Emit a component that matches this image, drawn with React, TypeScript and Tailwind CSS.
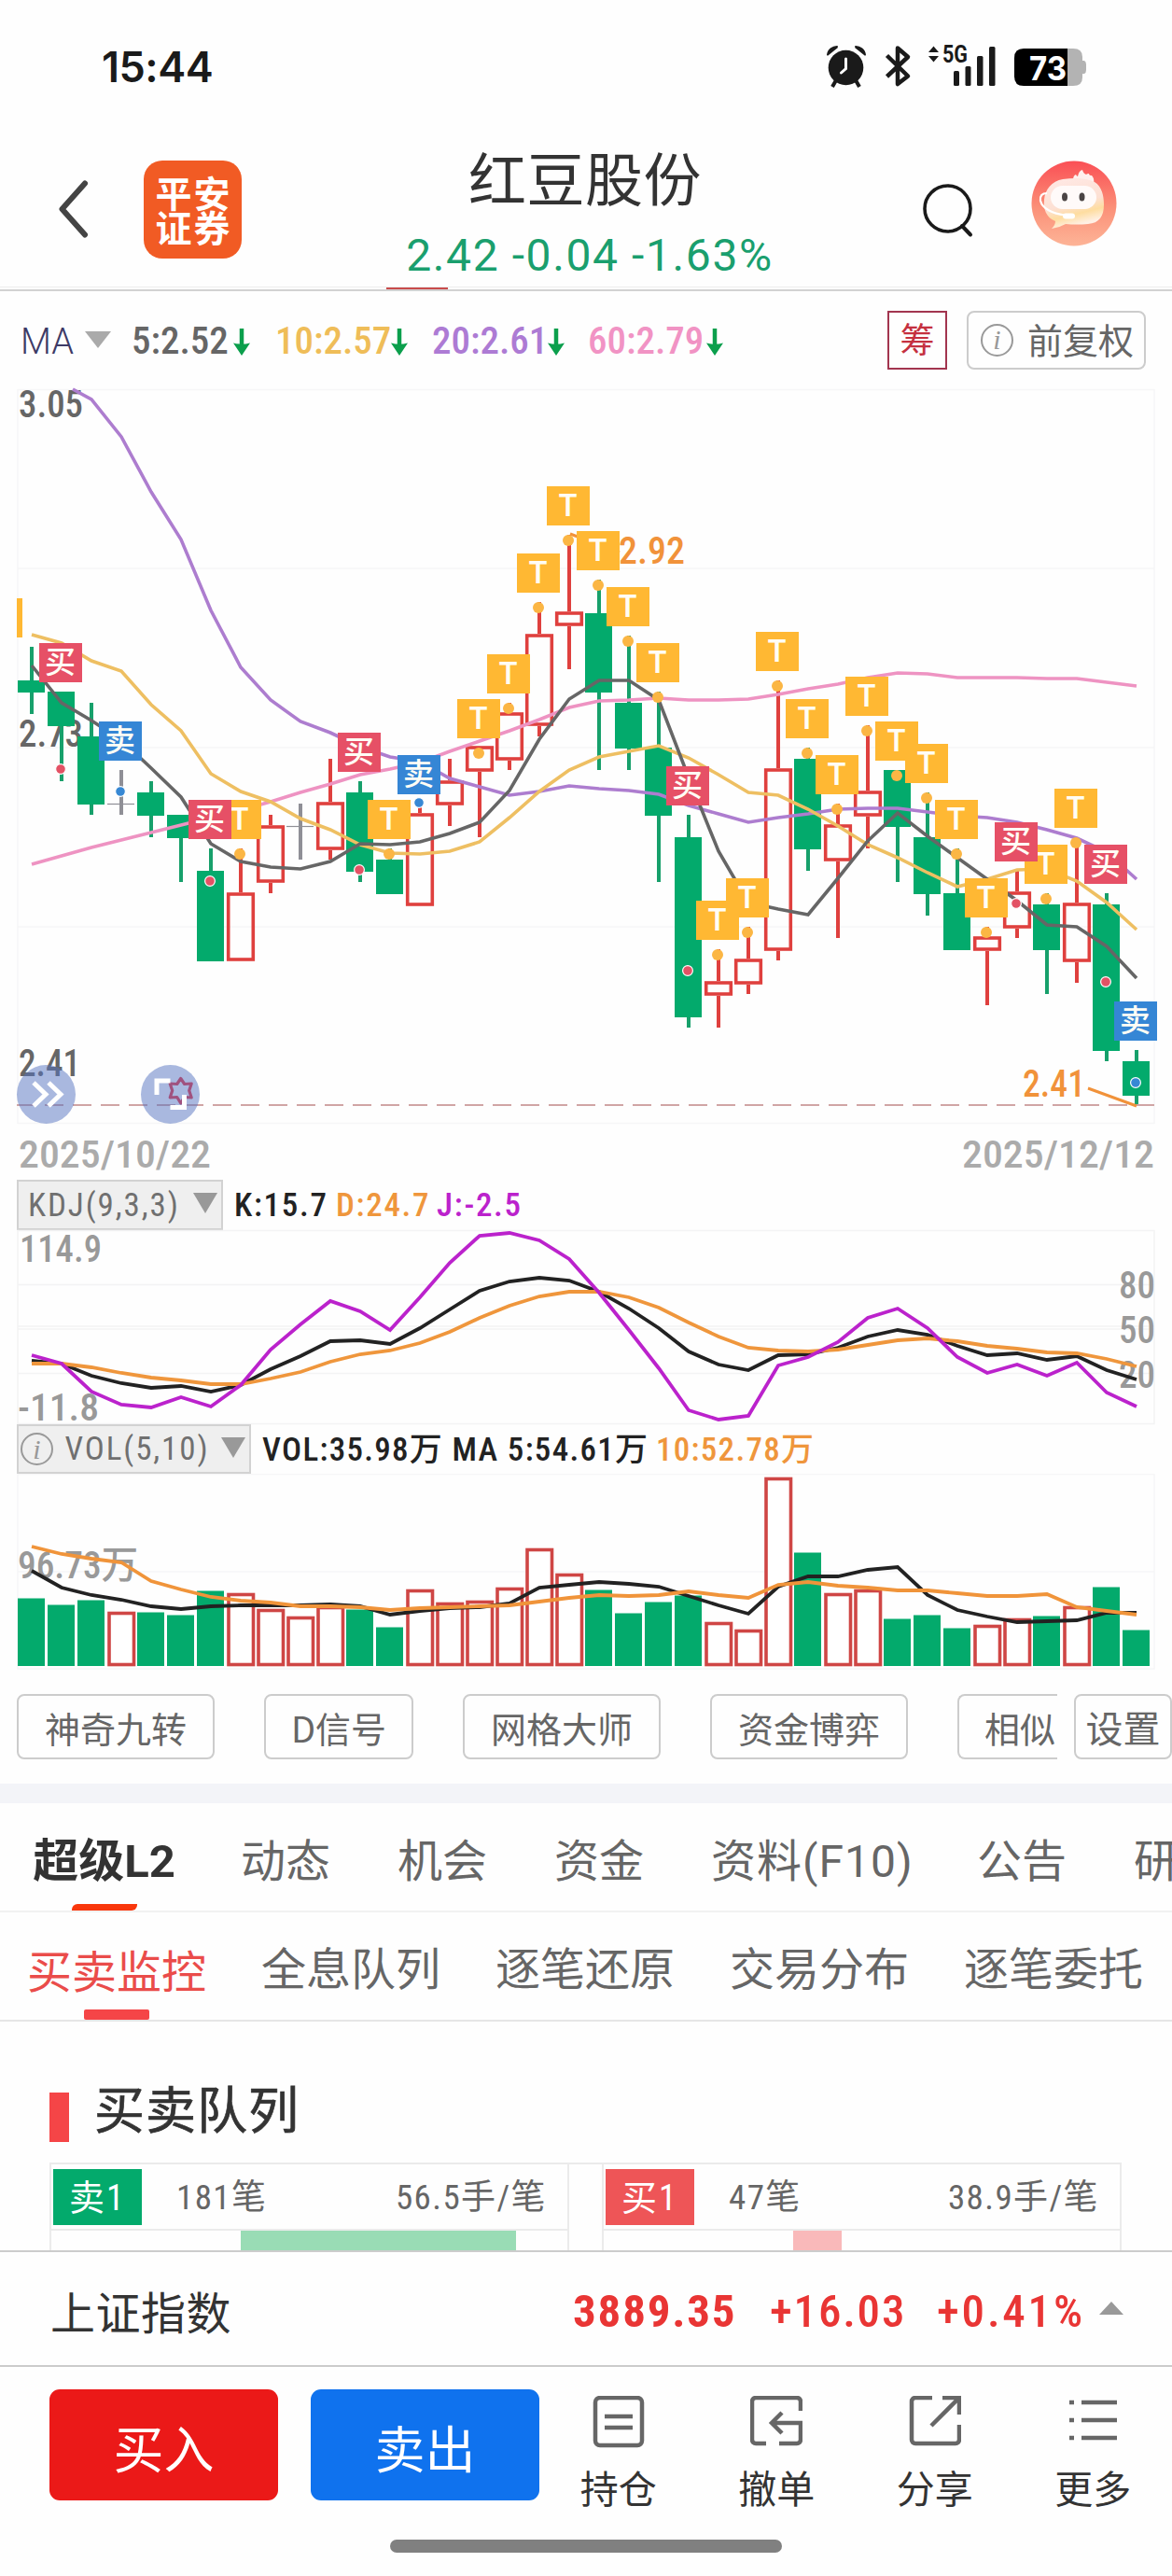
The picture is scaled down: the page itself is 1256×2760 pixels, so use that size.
import type { ReactNode } from "react";
import clsx from "clsx";

const GREEN = "#03aa6c";
const RED = "#df403e";
const GREY = "#8f8f96";

const NUM = "font-[Roboto,'Noto_Sans_CJK_SC',sans-serif] [font-stretch:85%]";

const STEP = 32;
const cx = (i: number) => 34 + i * STEP;
const line = (ys: number[], from = 0) =>
  ys.map((y, i) => `${cx(i + from)},${y}`).join(" ");

// kind, high, body top, body bottom, low
type Candle = ["g" | "r" | "d", number, number, number, number];

const candles: Candle[] = [
  ["g", 693, 729, 742, 765],
  ["g", 741, 741, 778, 837],
  ["g", 753, 789, 862, 873],
  ["d", 825, 861, 861, 873],
  ["g", 837, 849, 874, 897],
  ["g", 873, 873, 898, 945],
  ["g", 909, 933, 1030, 1030],
  ["r", 909, 956, 1030, 1030],
  ["r", 873, 884, 946, 957],
  ["d", 861, 885, 885, 921],
  ["r", 813, 859, 911, 921],
  ["g", 837, 849, 934, 945],
  ["g", 909, 921, 958, 958],
  ["r", 861, 871, 971, 971],
  ["r", 813, 836, 863, 885],
  ["r", 801, 799, 827, 897],
  ["r", 753, 763, 815, 825],
  ["r", 645, 679, 778, 789],
  ["r", 573, 655, 671, 717],
  ["g", 621, 657, 742, 825],
  ["g", 681, 753, 802, 825],
  ["g", 741, 801, 874, 945],
  ["g", 873, 897, 1090, 1101],
  ["r", 1017, 1051, 1067, 1101],
  ["r", 993, 1027, 1055, 1065],
  ["r", 729, 823, 1019, 1029],
  ["g", 801, 813, 910, 933],
  ["r", 861, 883, 923, 1005],
  ["r", 777, 847, 875, 909],
  ["g", 825, 825, 886, 945],
  ["g", 849, 897, 958, 981],
  ["g", 909, 957, 1018, 1018],
  ["r", 993, 1003, 1019, 1077],
  ["r", 933, 955, 995, 1005],
  ["g", 957, 969, 1018, 1065],
  ["r", 897, 967, 1031, 1053],
  ["g", 957, 969, 1126, 1137],
  ["g", 1125, 1137, 1174, 1184],
];

const ma5 = [
  713, 753, 772, 793, 823, 854, 904, 923, 929, 931, 923, 904, 905, 902, 893, 881, 847, 792, 749,
  729, 729, 750, 833, 912, 967, 974, 980, 941, 901, 871, 896, 919, 942, 965, 991, 993, 1014, 1048,
];
const ma10 = [
  680, 689, 708, 719, 755, 783, 829, 848, 859, 877, 889, 905, 914, 915, 912, 902, 876, 848, 825,
  811, 805, 799, 812, 830, 849, 852, 867, 885, 905, 919, 935, 950, 942, 932, 931, 944, 967, 996,
];
const ma20 = [
  428, 468, 527, 578, 654, 715, 750, 773, 785, 800, 811, 816, 834, 843, 852, 848, 842, 845, 847,
  851, 863, 872, 881, 876, 872, 867, 866, 866, 870, 874, 876, 881, 889, 898, 913, 942,
];
const ma60 = [
  926, 917, 908, 900, 892, 884, 876, 868, 859, 849, 840, 830, 824, 817, 805, 794, 783, 771, 758,
  751, 750, 748, 750, 750, 749, 744, 738, 733, 726, 721, 722, 726, 726, 726, 727, 727, 731, 735,
];

const tMarks = [7, 12, 15, 16, 17, 18, 19, 20, 21, 23, 24, 25, 26, 27, 28, 29, 30, 31, 32, 34, 35];
// candle index, y of the trade price
const buys: [number, number][] = [[1, 824], [6, 944], [11, 932], [22, 1040], [33, 968], [36, 1052]];
const sells: [number, number][] = [[3, 848], [13, 860], [37, 1160]];
const markTop = (i: number) => (i === 15 ? 749 : i === 30 ? 797 : candles[i][1] - 52);

const kdjJ = [
  1452, 1461, 1491, 1505, 1508, 1497, 1507, 1484, 1446, 1419, 1394, 1405, 1425, 1390, 1353, 1324,
  1321, 1329, 1349, 1385, 1425, 1466, 1511, 1521, 1517, 1463, 1454, 1438, 1412, 1402, 1423, 1454,
  1471, 1462, 1474, 1460, 1492, 1507,
];
const kdjK = [
  1458, 1461, 1474, 1482, 1487, 1485, 1491, 1484, 1467, 1453, 1437, 1436, 1440, 1423, 1403, 1383,
  1373, 1369, 1372, 1384, 1402, 1423, 1448, 1462, 1468, 1452, 1451, 1444, 1432, 1425, 1430, 1442,
  1452, 1450, 1457, 1453, 1468, 1478,
];
const kdjD = [
  1461, 1461, 1465, 1471, 1476, 1479, 1483, 1483, 1477, 1470, 1459, 1451, 1447, 1439, 1427, 1412,
  1399, 1389, 1384, 1384, 1390, 1401, 1417, 1432, 1444, 1447, 1448, 1446, 1441, 1436, 1434, 1437,
  1442, 1445, 1449, 1450, 1456, 1464,
];

const volTops = [
  1713, 1720, 1715, 1727, 1728, 1731, 1705, 1707, 1724, 1732, 1721, 1725, 1744, 1703, 1717, 1715,
  1701, 1659, 1686, 1704, 1729, 1717, 1710, 1738, 1746, 1583, 1664, 1707, 1703, 1735, 1731, 1745,
  1741, 1734, 1732, 1721, 1701, 1747,
];
const volMa5 = [
  1683, 1701, 1709, 1714, 1721, 1724, 1721, 1720, 1720, 1720, 1719, 1721, 1730, 1726, 1723, 1722,
  1718, 1701, 1698, 1695, 1697, 1700, 1710, 1720, 1729, 1700, 1689, 1689, 1682, 1679, 1709, 1725,
  1732, 1738, 1737, 1736, 1728, 1728,
];
const volMa10 = [
  1657, 1665, 1670, 1674, 1694, 1703, 1711, 1715, 1717, 1721, 1721, 1722, 1725, 1723, 1722, 1721,
  1720, 1716, 1712, 1709, 1710, 1709, 1705, 1709, 1712, 1698, 1695, 1699, 1701, 1704, 1704, 1707,
  1710, 1710, 1708, 1722, 1726, 1730,
];

type LabelProps = { x: number; y: number; w: number; fill: string; children: string };

// Axis label stretched to a fixed width so the digits stay narrow.
function Label({ x, y, w, fill, children }: LabelProps) {
  return (
    <text
      x={x - 1}
      y={y}
      textLength={w + 2}
      lengthAdjust="spacingAndGlyphs"
      fill={fill}
      className={clsx(NUM, "text-[41px] font-medium")}
    >
      {children}
    </text>
  );
}

function Badge({ x, y, text, fill }: { x: number; y: number; text: string; fill: string }) {
  return (
    <g>
      <rect x={x - 24} y={y} width={46} height={42} fill={fill} />
      <text
        x={x - 1.5}
        y={y + 32}
        textAnchor="middle"
        fill="#fffdf5"
        className={
          text === "T"
            ? "font-[Inter,sans-serif] text-[32px] font-semibold"
            : "font-['Noto_Sans_CJK_SC',sans-serif] text-[33px] font-medium"
        }
      >
        {text}
      </text>
    </g>
  );
}

function CandleBar({ i, c }: { i: number; c: Candle }) {
  const [kind, high, top, bottom, low] = c;
  const x = cx(i);
  if (kind === "d") {
    return (
      <g stroke={GREY}>
        <path d={`M${x} ${high}V${low}`} strokeWidth={4} />
        <path d={`M${x - 15} ${top + 0.5}H${x + 14}`} strokeWidth={1.2} />
      </g>
    );
  }
  if (kind === "g") {
    return (
      <g>
        <path d={`M${x} ${high}V${low}`} stroke="#17a06b" strokeWidth={4} />
        <rect x={x - 15} y={top} width={29} height={bottom - top} fill={GREEN} />
      </g>
    );
  }
  return (
    <g stroke={RED} fill="none">
      <path d={`M${x} ${Math.min(high, top)}V${top}M${x} ${bottom}V${low}`} strokeWidth={4} />
      <rect x={x - 13.3} y={top + 2} width={26.6} height={bottom - top - 4} strokeWidth={3.6} />
    </g>
  );
}

function PriceChart() {
  return (
    <svg viewBox="0 416 1256 848" className="block h-[848px] w-full overflow-visible">
      <g stroke="#f6f6f7" strokeWidth={1.5} fill="none">
        <path d="M19 417.5H1237V1203.5H19ZM19 609H1237M19 801H1237M19 993H1237" />
      </g>
      <Label x={21} y={447} w={67} fill="#666">3.05</Label>
      <Label x={21} y={800} w={67} fill="#666">2.73</Label>
      <Label x={21} y={1153} w={64} fill="#666">2.41</Label>

      {candles.map((c, i) => (
        <CandleBar key={i} i={i} c={c} />
      ))}

      <g fill="none" strokeWidth={3.6}>
        <polyline points={line(ma60)} stroke="#ee93c2" />
        <polyline points={`78,417 ${line(ma20, 2)}`} stroke="#ad7dcf" />
        <polyline points={line(ma10)} stroke="#eebf62" />
        <polyline points={line(ma5)} stroke="#666" />
      </g>

      <path d="M18 1184H1237" stroke="#d0a5a5" strokeWidth={2} strokeDasharray="20 10" />
      <path d="M1166 1166L1218 1185M611 572L664 592" stroke="#f1923a" strokeWidth={3} />
      <Label x={664} y={604} w={69} fill="#f1923a">2.92</Label>
      <Label x={1097} y={1175} w={65} fill="#f1923a">2.41</Label>

      <rect x={18} y={641} width={6} height={42} fill="#ffb833" />
      {tMarks.map((i) => (
        <g key={i}>
          <circle cx={cx(i) - 1} cy={markTop(i) + 58} r={6} fill="#fbb644" />
          <Badge x={cx(i)} y={markTop(i)} text="T" fill="#ffb833" />
        </g>
      ))}
      {buys.map(([i, y]) => (
        <g key={i}>
          <circle cx={cx(i) - 1} cy={y} r={5.4} fill="#e35265" stroke="#fff" strokeWidth={1.2} />
          <Badge x={cx(i)} y={markTop(i)} text="买" fill="#e65066" />
        </g>
      ))}
      {sells.map(([i, y]) => (
        <g key={i}>
          <circle cx={cx(i) - 1} cy={y} r={5.4} fill="#3788d4" stroke="#fff" strokeWidth={1.2} />
          <Badge x={cx(i)} y={markTop(i)} text="卖" fill="#3586d5" />
        </g>
      ))}

      <circle cx={49.5} cy={1172.5} r={31.5} fill="#5472c0" fillOpacity={0.5} />
      <path d="M36 1160L49 1172.5L36 1185M52 1160L65 1172.5L52 1185" stroke="#fff" strokeWidth={5} fill="none" />
      <circle cx={182.5} cy={1172.5} r={31.5} fill="#5472c0" fillOpacity={0.5} />
      <path
        d="M193.7 1155.5l4 6 7.500-.5-2.500 7.500 2.500 7.500-7.500-.5-4 6.500-4-6.500-7.500 .5 2.500-7.500-2.500-7.500 7.500 .5z"
        fill="none"
        stroke="#a0527f"
        strokeWidth={3.2}
        strokeLinejoin="round"
      />
      <path d="M168 1173V1158H182.500M182.500 1186.500H197.500V1173" stroke="#fff" strokeWidth={5} fill="none" />

      <Label x={21} y={1251} w={204} fill="#ababab">2025/10/22</Label>
      <Label x={1032} y={1251} w={204} fill="#ababab">2025/12/12</Label>
    </svg>
  );
}

function KdjChart() {
  return (
    <svg viewBox="0 1318 1256 208" className="block h-[208px] w-full overflow-visible">
      <g stroke="#f3f3f4" strokeWidth={1.5} fill="none">
        <path d="M19 1318.500H1237V1525.500H19ZM19 1376.500H1237M19 1421H1237M19 1424H1237M19 1471.500H1237" />
      </g>
      <Label x={22} y={1352} w={86} fill="#999">114.9</Label>
      <Label x={20} y={1522} w={85} fill="#999">-11.8</Label>
      <Label x={1200} y={1391} w={37} fill="#999">80</Label>
      <Label x={1200} y={1439} w={37} fill="#999">50</Label>
      <Label x={1200} y={1487} w={37} fill="#999">20</Label>
      <g fill="none" strokeWidth={3.8}>
        <polyline points={line(kdjK)} stroke="#222" />
        <polyline points={line(kdjD)} stroke="#ef963c" />
        <polyline points={line(kdjJ)} stroke="#bb22cc" />
      </g>
    </svg>
  );
}

function VolumeChart() {
  return (
    <svg viewBox="0 1579 1256 210" className="block h-[210px] w-full">
      <path d="M19 1579.500H1237V1788H19ZM19 1684H1237" stroke="#f6f6f7" strokeWidth={1.5} fill="none" />
      <Label x={20} y={1691} w={127} fill="#999">96.73万</Label>
      {volTops.map((y, i) =>
        candles[i][0] === "g" ? (
          <rect key={i} x={cx(i) - 15} y={y - 0.5} width={29} height={1785.5 - y} fill={GREEN} />
        ) : (
          <rect
            key={i}
            x={cx(i) - 13}
            y={y + 1.5}
            width={26.5}
            height={1782 - y}
            fill="#fff"
            stroke="#cf4645"
            strokeWidth={3.6}
          />
        )
      )}
      <g fill="none" strokeWidth={3.8}>
        <polyline points={line(volMa5)} stroke="#222" />
        <polyline points={line(volMa10)} stroke="#f0943a" />
      </g>
    </svg>
  );
}

function StatusBar() {
  return (
    <div className="flex h-[143px] items-center justify-between pl-[109px] pr-[91px]">
      <span className="font-[Inter,sans-serif] text-[45px] font-semibold tracking-[-0.5px] text-[#1a1a1a]">
        15:44
      </span>
      <svg viewBox="884 48 282 48" className="h-[48px] w-[282px] overflow-visible text-[#1a1a1a]">
        {/* alarm */}
        <g fill="currentColor">
          <circle cx="907.5" cy="72.500" r="18.800" />
          <path d="M887 59a11 11 0 0 1 12-10q-1 1 0 2l-10 8q-1 1-2 0zM929 59a11 11 0 0 0-12-10q1 1 0 2l10 8q1 1 2 0z" />
          <path d="M897 86l-4 7M918 86l4 7" stroke="currentColor" strokeWidth="4" />
        </g>
        <path d="M907.500 63V73.500L902.500 78" fill="none" stroke="#fff" strokeWidth="3" strokeLinecap="round" />
        {/* bluetooth */}
        <path
          d="M951.500 59.500L974 81.500L963 90V51.500L974 61L951.500 82"
          fill="none"
          stroke="currentColor"
          strokeWidth="4.500"
          strokeLinejoin="round"
        />
        {/* mobile signal */}
        <g fill="currentColor">
          <path d="M1001.500 49.500L1007 56H996zM1001.500 66.500L1007 60H996z" />
          <text
            x="1011"
            y="67"
            textLength="27"
            lengthAdjust="spacingAndGlyphs"
            className="font-[Roboto,sans-serif] text-[25px] font-bold"
          >
            5G
          </text>
          <rect x="1023" y="76" width="6" height="16" rx="1.500" />
          <rect x="1035.500" y="71" width="6" height="21" rx="1.500" />
          <rect x="1048" y="60" width="6.500" height="32" rx="1.500" />
          <rect x="1061" y="50" width="6.500" height="42" rx="1.500" />
        </g>
        {/* battery */}
        <path d="M1140 52H1151q10 0 10 9v4h2q2 1 2 4v6q0 3-2 4h-2v4q0 9-10 9H1140z" fill="#b3b3b3" />
        <path d="M1145 52H1098q-10 0-10 10V82q0 10 10 10H1145z" fill="#000" />
        <text
          x="1104"
          y="85.500"
          textLength="40"
          lengthAdjust="spacingAndGlyphs"
          fill="#fff"
          className="font-[Inter,sans-serif] text-[36px] font-bold"
        >
          73
        </text>
      </svg>
    </div>
  );
}

function Avatar() {
  return (
    <svg viewBox="0 0 92 92" className="mb-[12px] ml-[62px] size-[92px]">
      <defs>
        <linearGradient id="sky" x1="0" y1="0" x2="0" y2="1">
          <stop offset="0" stopColor="#fa4f55" />
          <stop offset=".55" stopColor="#fb9078" />
          <stop offset="1" stopColor="#fdb497" />
        </linearGradient>
        <linearGradient id="head" x1="0" y1="0" x2=".3" y2="1">
          <stop offset="0" stopColor="#ffe9e6" />
          <stop offset=".6" stopColor="#fde0d3" />
          <stop offset=".8" stopColor="#fedda0" />
          <stop offset="1" stopColor="#fff0e4" />
        </linearGradient>
      </defs>
      <circle cx="46" cy="46" r="45.500" fill="url(#sky)" />
      <path d="M45 21q0-5 3-6 1 2 2 2 1-6 5-7 1 4 4 5 1-1 3-1 0 2 3 2 3 3 2 8z" fill="#fff0ee" />
      <path
        d="M34 20q22-3 34 3c8 5 10 15 10 24 0 13-5 20-17 21q-12 1-24 0-7 4-15 5 4-4 4-8C16 61 13 52 14 42c1-11 8-20 20-22z"
        fill="url(#head)"
      />
      <rect x="21" y="27" width="49" height="25" rx="12.500" fill="#fffaf9" />
      <ellipse cx="36" cy="39" rx="3" ry="4.500" fill="#4a4444" />
      <ellipse cx="54.500" cy="39" rx="3" ry="4.500" fill="#4a4444" />
      <path d="M17 35q-8 0-7 8c2 9 14 14 26 15.500" fill="none" stroke="#fff" strokeWidth="2.200" />
      <rect x="34" y="56.500" width="13" height="6" rx="3" fill="#fff" />
    </svg>
  );
}

function Header() {
  return (
    <header>
      <div className="flex h-[162px] items-center">
        <svg viewBox="0 0 36 62" className="ml-[60px] h-[62px] w-[36px]">
          <path d="M31 3.500L6.500 31L31 58.500" fill="none" stroke="#444" strokeWidth="6" strokeLinecap="round" strokeLinejoin="round" />
        </svg>
        <div className="ml-[58px] flex size-[105px] flex-col items-center justify-center rounded-[20px] bg-[#f15b24] text-[39px] leading-[37px] font-bold tracking-[2px] text-white">
          <span className="pl-[2px]">平安</span>
          <span className="pl-[2px]">证券</span>
        </div>
        <div className="flex h-full flex-1 flex-col items-center pt-[8px] pl-[6px]">
          <h1 className="text-[62px] leading-[76px] tracking-[0.5px] text-[#333]">红豆股份</h1>
          <p className={clsx(NUM, "mt-[17px] pl-[10px] text-[48px] leading-[60px] tracking-[1.6px] [font-stretch:90%] text-[#1a9f6e]")}>
            2.42 -0.04 -1.63%
          </p>
        </div>
        <svg viewBox="0 0 54 58" className="mt-[4px] h-[58px] w-[54px]">
          <circle cx="26.500" cy="26.500" r="24.500" fill="none" stroke="#1a1a1a" strokeWidth="3.600" />
          <path d="M42 45L51 54.500" stroke="#1a1a1a" strokeWidth="4" strokeLinecap="round" />
        </svg>
        <Avatar />
        <div className="w-[59px]" />
      </div>
      <div className="h-[7px] border-b-2 border-[#d2d2d2] pt-[2px]">
        <div className="border-t border-[#ededed]">
          <div className="ml-[414px] h-[2px] w-[66px] bg-[#c94c4c]" />
        </div>
      </div>
    </header>
  );
}

function InfoIcon() {
  return (
    <span className="flex size-[35px] items-center justify-center rounded-full border-2 border-[#999] font-['Liberation_Serif',serif] text-[30px] leading-none tracking-normal text-[#999] italic">
      i
    </span>
  );
}

const averages = [
  { text: "5:2.52", box: "w-[154px] text-[#666]" },
  { text: "10:2.57", box: "w-[168px] text-[#efbd58]" },
  { text: "20:2.61", box: "w-[167px] text-[#ad7bd4]" },
  { text: "60:2.79", box: "w-[172px] text-[#f193c4]" },
];

function MaRow() {
  return (
    <div className={clsx(NUM, "flex h-[104px] items-center text-[41px]")}>
      <span className="w-[67px] pt-[5px] pl-[22px] text-[38px] [font-stretch:95%] font-light text-[#3d3a66]">MA</span>
      <svg viewBox="0 0 28 18" className="ml-[24px] h-[18px] w-[28px]">
        <path d="M0 0H28L14 18z" fill="#aaa" />
      </svg>
      <div className="ml-[22px] flex flex-1 pt-[3px]">
        {averages.map((a) => (
          <div
            key={a.text}
            className={clsx("flex shrink-0 items-center justify-between pr-[27px] font-medium [font-stretch:82%] whitespace-nowrap", a.box)}
          >
            {a.text}
            <svg viewBox="0 0 18 30" className="h-[30px] w-[18px] shrink-0">
              <path d="M9 1V20" stroke="#0b9f4c" strokeWidth="4.500" />
              <path d="M0 16.500Q9 19 18 16.500L9 30z" fill="#0b9f4c" />
            </svg>
          </div>
        ))}
      </div>
      <div className="flex h-[63px] w-[64px] items-center justify-center border-2 border-[#a2354f] pt-[3px] text-[37px] text-[#c5303f]">
        筹
      </div>
      <div className="mr-[28px] ml-[21px] flex h-[63px] w-[192px] items-center gap-[15px] rounded-[8px] border-2 border-[#ccc] pl-[13px] text-[38px] whitespace-nowrap text-[#666]">
        <InfoIcon />
        <span className="pt-[5px]">前复权</span>
      </div>
    </div>
  );
}

function IndicatorSelect({ className, children }: { className: string; children: ReactNode }) {
  return (
    <div
      className={clsx(
        "ml-[18px] flex h-full shrink-0 items-center justify-between border-2 border-[#d2d2d2] bg-[#efefef] text-[35px] tracking-[1.9px] text-[#707070]",
        className
      )}
    >
      {children}
      <svg viewBox="0 0 26 22" className="mb-[4px] h-[22px] w-[26px]">
        <path d="M0 0H26L13 22z" fill="#999" />
      </svg>
    </div>
  );
}

const tools = [
  { name: "神奇九转", width: "w-[212px]" },
  { name: "D信号", width: "w-[160px]" },
  { name: "网格大师", width: "w-[212px]" },
  { name: "资金博弈", width: "w-[212px]" },
];

function ToolRow() {
  return (
    <div className="flex h-[122px] items-center pl-[18px] text-[38px] text-[#666]">
      <div className="flex gap-[53px]">
        {tools.map((t) => (
          <div
            key={t.name}
            className={clsx("flex h-[70px] items-center justify-center rounded-[8px] border-2 border-[#ccc]", t.width)}
          >
            {t.name}
          </div>
        ))}
        <div className="flex h-[70px] w-[107px] items-center overflow-hidden rounded-l-[8px] border-2 border-r-0 border-[#ccc] pl-[27px] whitespace-nowrap">
          相似
        </div>
      </div>
      <div className="ml-[18px] flex h-[70px] w-[105px] shrink-0 items-center justify-center rounded-[8px] border-2 border-[#ccc] text-[40px]">
        设置
      </div>
    </div>
  );
}

const tabs = [
  { name: "动态", width: "w-[96px]" },
  { name: "机会", width: "w-[96px]" },
  { name: "资金", width: "w-[96px]" },
  { name: "资料(F10)", width: "w-[213px] tracking-[1px]" },
  { name: "公告", width: "w-[96px]" },
  { name: "研报", width: "w-[96px]" },
];
const subTabs = ["全息队列", "逐笔还原", "交易分布", "逐笔委托"];

function Tabs() {
  return (
    <nav className="text-[48px] text-[#666]">
      <div className="flex h-[117px] gap-[72px] overflow-hidden border-b-2 border-[#f2f2f2] pl-[37px] whitespace-nowrap">
        <div className="flex w-[149px] shrink-0 flex-col items-center">
          <span className={clsx(NUM, "pt-[11px] text-[49px] leading-[104px] font-bold [font-stretch:90%] text-[#333]")}>
            超级L2
          </span>
          <span className="-mt-[7px] h-[7px] w-[70px] shrink-0 rounded-tl-[6px] rounded-br-[6px] bg-[#f9370c]" />
        </div>
        {tabs.map((t) => (
          <span
            key={t.name}
            className={clsx(NUM, "shrink-0 pt-[11px] leading-[104px] [font-stretch:95%]", t.width)}
          >
            {t.name}
          </span>
        ))}
      </div>
      <div className="flex h-[117px] justify-between border-b-2 border-[#e6e6e6] pr-[31px] pl-[29px] whitespace-nowrap">
        <div className="flex flex-col items-center text-[#ea4c4a]">
          <span className="pt-[2px] leading-[116px]">买卖监控</span>
          <span className="-mt-[14px] h-[11px] w-[70px] rounded-[2px] bg-[#f54547]" />
        </div>
        {subTabs.map((t) => (
          <span key={t} className="leading-[115px]">
            {t}
          </span>
        ))}
      </div>
    </nav>
  );
}

type QueueProps = { side: string; color: string; count: string; average: string; width: string; bar: string };

function Queue({ side, color, count, average, width, bar }: QueueProps) {
  return (
    <div className={clsx("border-x-2 border-[#ebebeb]", width)}>
      <div className="flex h-[71px] items-center border-b-2 border-[#ebebeb] pr-[22px] pl-[2px] text-[37px] text-[#666]">
        <span className={clsx("flex h-[60px] w-[95px] items-center justify-center pt-[4px] text-[38px] tracking-[2px] text-white", color)}>
          {side}
        </span>
        <span className="flex-1 pt-[3px] pl-[37px]">{count}</span>
        <span className="pt-[3px]">{average}</span>
      </div>
      <div className={clsx("h-[22px]", bar)} />
    </div>
  );
}

function QueueSection() {
  return (
    <section className="h-[245px] overflow-hidden pt-[45px]">
      <div className="flex h-[106px] items-center pb-[12px] pl-[53px]">
        <span className="mt-[20px] h-[53px] w-[21px] bg-[#f54547]" />
        <h2 className="ml-[27px] text-[54px] leading-[60px] tracking-[1px] [-webkit-text-stroke:0.7px_#333] text-[#333]">
          买卖队列
        </h2>
      </div>
      <div className={clsx(NUM, "mr-[54px] ml-[53px] flex justify-between border-t-2 border-[#ebebeb] tracking-[1.4px]")}>
        <Queue side="卖1" color="bg-[#03aa6c]" count="181笔" average="56.5手/笔" width="w-[557px]" bar="ml-[203px] w-[295px] bg-[#99dcb5]" />
        <Queue side="买1" color="bg-[#ee5557]" count="47笔" average="38.9手/笔" width="w-[557px]" bar="ml-[203px] w-[52px] bg-[#f9b9ba]" />
      </div>
    </section>
  );
}

const actions = [
  {
    name: "持仓",
    icon: (
      <>
        <rect x="3" y="2" width="50" height="51" rx="5" />
        <path d="M13 22H43M13 34H43" />
      </>
    ),
  },
  {
    name: "撤单",
    icon: (
      <path d="M54 16V6a4 4 0 0 0-4-4H6a4 4 0 0 0-4 4V47a4 4 0 0 0 4 4H17M31 51H50a4 4 0 0 0 4-4V29H24M34 18L23 29 34 40" />
    ),
  },
  {
    name: "分享",
    icon: <path d="M25 2H7a4 4 0 0 0-4 4V47a4 4 0 0 0 4 4H50a4 4 0 0 0 4-4V31M36 2H54V20M53 3L24 32" />,
  },
  {
    name: "更多",
    icon: <path d="M3 7H8M16 7H54M3 26H8M16 26H54M3 45H8M16 45H54" />,
  },
];

function Footer() {
  return (
    <footer className="flex h-[349px] flex-col">
      <div className="flex h-[125px] items-center border-y-2 border-[#ccc] pl-[54px] text-[48px] text-[#333]">
        <span className="w-[560px] pt-[2px] tracking-[0.5px]">上证指数</span>
        <div className={clsx(NUM, "flex items-center pt-[7px] text-[49px] tracking-[1.8px] whitespace-nowrap text-[#e93534]")}>
          <span className="w-[211px] font-bold">3889.35</span>
          <span className="w-[179px] font-medium">+16.03</span>
          <span className="w-[173px] font-medium tracking-[2.8px]">+0.41%</span>
          <svg viewBox="0 0 26 14" className="mb-[8px] ml-[1px] h-[14px] w-[26px] shrink-0">
            <path d="M0 14H26L13 0z" fill="#999" />
          </svg>
        </div>
      </div>
      <div className="flex pt-[24px] pl-[53px]">
        <button className="h-[119px] w-[245px] rounded-[11px] bg-[#eb1918] pt-[4px] text-[54px] text-white">买入</button>
        <button className="ml-[35px] h-[119px] w-[245px] rounded-[11px] bg-[#0f72ee] pt-[4px] text-[54px] text-white">卖出</button>
        <div className="flex">
          {actions.map((a) => (
            <div key={a.name} className="flex w-[169.5px] flex-col items-center pt-[7px] text-[41px] text-[#333]">
              <svg viewBox="0 0 56 56" className="h-[56px] w-[56px]" fill="none" stroke="#666" strokeWidth="4.500">
                {a.icon}
              </svg>
              <span className="mt-[12px] leading-[58px]">{a.name}</span>
            </div>
          ))}
        </div>
      </div>
      <div className="mx-auto mt-auto mb-[25px] h-[14px] w-[420px] rounded-full bg-[#808080]" />
    </footer>
  );
}

export default function App() {
  return (
    <main className="h-[2760px] w-[1256px] overflow-hidden bg-[#fefefe] font-['Noto_Sans_CJK_SC',sans-serif]">
      <StatusBar />
      <Header />
      <MaRow />
      <PriceChart />
      <div className={clsx(NUM, "flex h-[54px] items-center text-[35px] font-medium tracking-[1.7px] text-[#222]")}>
        <IndicatorSelect className="w-[221px] pr-[4px] pl-[10px] font-normal">
          <span className="pt-[2px]">KDJ(9,3,3)</span>
        </IndicatorSelect>
        <span className="ml-[12px] w-[109px] pt-[2px]">K:15.7</span>
        <span className="w-[108px] pt-[2px] text-[#ef963c]">D:24.7</span>
        <span className="pt-[2px] text-[#bb22cc]">J:-2.5</span>
      </div>
      <KdjChart />
      <div className={clsx(NUM, "flex h-[53px] items-center text-[35px] font-medium tracking-[1.3px] text-[#222]")}>
        <IndicatorSelect className="w-[251px] pr-[4px] pl-[2px] font-normal">
          <InfoIcon />
          <span className="pt-[2px]">VOL(5,10)</span>
        </IndicatorSelect>
        <span className="ml-[12px] w-[422px] pt-[3px] whitespace-nowrap">VOL:35.98万 MA 5:54.61万</span>
        <span className="pt-[3px] text-[#ef963c]">10:52.78万</span>
      </div>
      <VolumeChart />
      <ToolRow />
      <div className="h-[21px] bg-[#f3f4f8]" />
      <Tabs />
      <QueueSection />
      <Footer />
    </main>
  );
}
